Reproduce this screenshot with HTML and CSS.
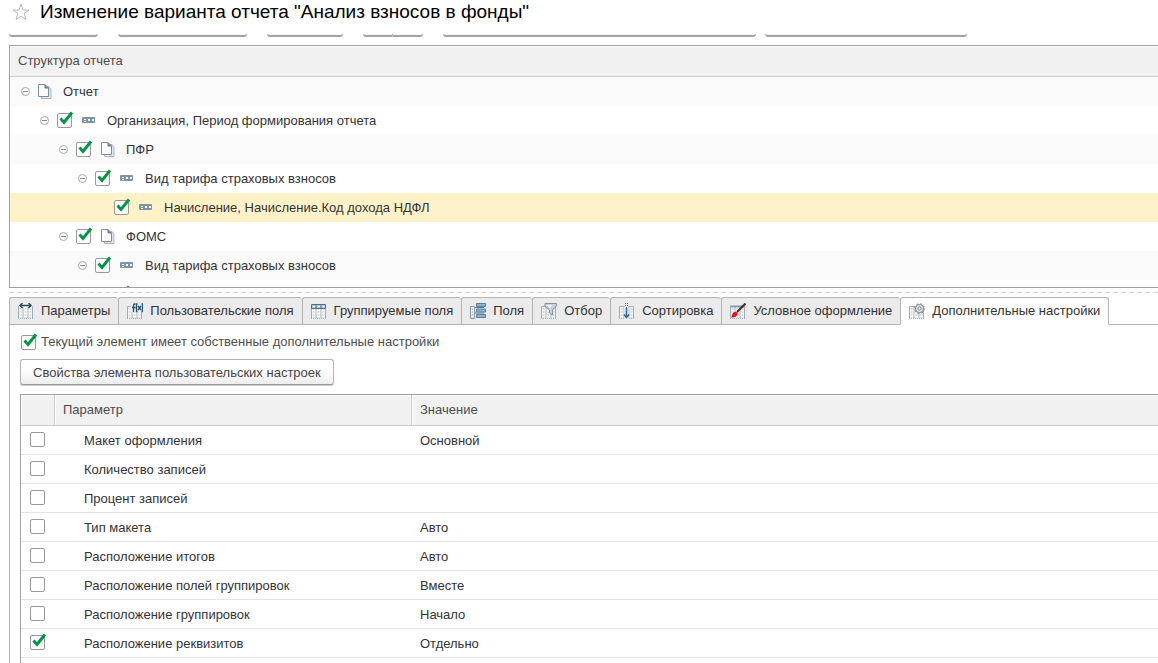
FILE: index.html
```
<!DOCTYPE html>
<html lang="ru">
<head>
<meta charset="utf-8">
<title>Изменение варианта отчета "Анализ взносов в фонды"</title>
<link rel="stylesheet" href="styles.css">
</head>
<body>
<svg class="defs" aria-hidden="true">
  <symbol id="minus" viewBox="0 0 9 9"><circle cx="4.5" cy="4.5" r="4" fill="#fff" stroke="#a6a6a6"/><path d="M2 4.5h5" stroke="#888"/></symbol>
  <symbol id="tick" viewBox="0 0 17 17"><path d="M3.500 7.500L7 11.500L15 1.500" fill="none" stroke="#009646" stroke-width="3"/></symbol>
  <symbol id="doc" viewBox="0 0 14 15"><path d="M8.500 2.500H11L13 5V14.500H3.500V13" fill="#dfe6ec" stroke="#a9b6c2"/><path d="M.5.5H7L10.500 4V12.500H.5Z" fill="#fff" stroke="#7b8fa1"/><path d="M7 .5V4H10.500" fill="#7b8fa1" stroke="#60788e"/></symbol>
  <symbol id="grp" viewBox="0 0 14 15"><rect y="4" width="13" height="6" rx="1" fill="#7c93a8"/><path d="M2 6h2v1H2zM2 8h2v1H2zM6 6h2v2H6zM10 6h2v2h-2z" fill="#fff"/></symbol>
  <symbol id="cols" viewBox="0 0 16 16"><path d="M.5 3.500H14.500V15H.5z" fill="#fff"/><path d="M.5 15V3.500H14.500V15M5 4V15M10 4V15" fill="none" stroke="#9fadb7"/><path d="M2.500 5V15M7.500 5V15M12.500 5V15" stroke="#d3dbe0" stroke-width="2" stroke-dasharray="2 1"/><path d="M0 15.500h15" stroke="#9fadb7" stroke-dasharray="1 1"/></symbol>
</svg>
<main class="window">
  <header class="title-bar">
    <svg class="star" viewBox="0 0 18 18"><path d="M9 1L11 7H17L12 10.500L14 16.500L9 13L4 16.500L6 10.500L1 7H7Z" fill="#fff" stroke="#b4b8bd"/></svg>
    <h1>Изменение варианта отчета "Анализ взносов в фонды"</h1>
  </header>
  <div class="commands">
    <button type="button" class="cmd cmd-s"></button>
    <button type="button" class="cmd cmd-m"></button>
    <button type="button" class="cmd cmd-xs"></button>
    <div class="split"><button type="button" class="cmd"></button><button type="button" class="cmd"></button></div>
    <div class="pair"><button type="button" class="cmd cmd-xl"></button><button type="button" class="cmd cmd-l"></button></div>
  </div>

  <section class="tree">
    <h2 class="tree-head" id="tree-title">Структура отчета</h2>
    <div class="tree-body">
      <div class="node alt"><svg class="fold"><use href="#minus"/></svg><svg class="kind"><use href="#doc"/></svg><span>Отчет</span></div>
      <div class="node lvl1"><svg class="fold"><use href="#minus"/></svg><span class="check"><input type="checkbox" id="n1" checked><svg><use href="#tick"/></svg></span><svg class="kind"><use href="#grp"/></svg><label for="n1">Организация, Период формирования отчета</label></div>
      <div class="node lvl2 alt"><svg class="fold"><use href="#minus"/></svg><span class="check"><input type="checkbox" id="n2" checked><svg><use href="#tick"/></svg></span><svg class="kind"><use href="#doc"/></svg><label for="n2">ПФР</label></div>
      <div class="node lvl3"><svg class="fold"><use href="#minus"/></svg><span class="check"><input type="checkbox" id="n3" checked><svg><use href="#tick"/></svg></span><svg class="kind"><use href="#grp"/></svg><label for="n3">Вид тарифа страховых взносов</label></div>
      <div class="node lvl4 selected"><span class="fold"></span><span class="check"><input type="checkbox" id="n4" checked><svg><use href="#tick"/></svg></span><svg class="kind"><use href="#grp"/></svg><label for="n4">Начисление, Начисление.Код дохода НДФЛ</label></div>
      <div class="node lvl2"><svg class="fold"><use href="#minus"/></svg><span class="check"><input type="checkbox" id="n5" checked><svg><use href="#tick"/></svg></span><svg class="kind"><use href="#doc"/></svg><label for="n5">ФОМС</label></div>
      <div class="node lvl3 alt"><svg class="fold"><use href="#minus"/></svg><span class="check"><input type="checkbox" id="n6" checked><svg><use href="#tick"/></svg></span><svg class="kind"><use href="#grp"/></svg><label for="n6">Вид тарифа страховых взносов</label></div>
      <div class="node lvl4"><span class="fold"></span><span class="check"><input type="checkbox" aria-labelledby="tree-title" checked><svg><use href="#tick"/></svg></span></div>
    </div>
  </section>
  <div class="splitter"></div>

  <div class="tabs" role="tablist">
    <button type="button" role="tab" class="tab"><svg viewBox="0 0 16 16"><use href="#cols"/><path d="M1 0h13v4H1z" fill="#ebebeb"/><path d="M2 2.500H13M4.500 0L2 2.500L4.500 5M10.500 0L13 2.500L10.500 5" fill="none" stroke="#2d4a5c" stroke-width="1.500"/></svg>Параметры</button>
    <button type="button" role="tab" class="tab"><svg viewBox="0 0 16 16"><use href="#cols"/><path d="M4 0h12v9H4z" fill="#ebebeb"/><path d="M8.500 1H7.500Q6.500 1 6.500 2.500V9M5 4.500H8.500M10.500 1H9.500V8.500H10.500M14.500 1H15.500V8.500H14.500M11 3L14 7M14 3L11 7" fill="none" stroke="#29506b" stroke-width="1.300"/></svg>Пользовательские поля</button>
    <button type="button" role="tab" class="tab"><svg viewBox="0 0 16 16"><use href="#cols"/><path d="M.5 1.500H14.500V5.500H.5z" fill="#b9cbd8" stroke="#4d7088"/><path d="M5 1.500V6M10 1.500V6" stroke="#4d7088"/><path d="M2 3.500h2M7 3.500h2M11.500 3.500h2" stroke="#fff"/></svg>Группируемые поля</button>
    <button type="button" role="tab" class="tab"><svg viewBox="0 0 16 16"><path d="M.5 3.500H4.500V15.500H.5z" fill="#fff" stroke="#8799a6"/><path d="M2.500 5V15" stroke="#c0cbd2" stroke-width="2" stroke-dasharray="2 1"/><path d="M6.500.5h9v3h-9zM6.500 6h9v3h-9zM6.500 11.500h9v3h-9z" fill="#8db4cd" stroke="#557f9b"/><path d="M5 4.500H14M5 10H14" stroke="#557f9b"/></svg>Поля</button>
    <button type="button" role="tab" class="tab"><svg viewBox="0 0 16 16"><use href="#cols"/><path d="M4 .5H15.500V3L11.500 7V12L8.500 10V7L4 3Z" fill="#c9d2d8" stroke="#8495a1"/><path d="M6 2h5L9 5Z" fill="#f7f9fa"/></svg>Отбор</button>
    <button type="button" role="tab" class="tab"><svg viewBox="0 0 16 16"><use href="#cols"/><path d="M5.500 0h4v16h-4z" fill="#ebebeb"/><path d="M7.500 5V14" stroke="#2f6697" stroke-width="1.500"/><path d="M5 11.500L7.500 14.500L10 11.500" fill="none" stroke="#2f6697" stroke-width="1.500"/><path d="M6 .5h3M6 2.500h3M7 4.500h1" stroke="#2f6697" stroke-dasharray="1 1"/></svg>Сортировка</button>
    <button type="button" role="tab" class="tab"><svg viewBox="0 0 16 16"><use href="#cols"/><path d="M.5 3.500H14" stroke="#8799a6" stroke-width="2"/><path d="M7 9L15.500 .5" stroke="#4b2c1b" stroke-width="2"/><path d="M1 14.500Q2 13 2.500 10.500Q5 7.500 7.500 10Q7.500 14.500 1 14.500Z" fill="#f20d0d"/></svg>Условное оформление</button>
    <button type="button" role="tab" class="tab active" aria-selected="true"><svg viewBox="0 0 16 16"><use href="#cols"/><circle cx="10.500" cy="5.500" r="4" fill="#dfe3e6" stroke="#8b959d" stroke-width="1.200"/><circle cx="10.500" cy="5.500" r="4.800" fill="none" stroke="#8b959d" stroke-width="1.200" stroke-dasharray="1.900 1.870"/><circle cx="10.500" cy="5.500" r="1.500" fill="#fff" stroke="#77828a"/></svg>Дополнительные настройки</button>
  </div>

  <section class="panel">
    <div class="own"><span class="check"><input type="checkbox" id="own" checked><svg><use href="#tick"/></svg></span><label for="own">Текущий элемент имеет собственные дополнительные настройки</label></div>
    <button type="button" class="props">Свойства элемента пользовательских настроек</button>
    <div class="grid">
      <table>
        <colgroup><col class="c-check"><col class="c-name"><col></colgroup>
        <thead><tr><th></th><th>Параметр</th><th>Значение</th></tr></thead>
        <tbody>
          <tr><td><span class="check"><input type="checkbox" id="p1"></span></td><td><label for="p1">Макет оформления</label></td><td>Основной</td></tr>
          <tr><td><span class="check"><input type="checkbox" id="p2"></span></td><td><label for="p2">Количество записей</label></td><td></td></tr>
          <tr><td><span class="check"><input type="checkbox" id="p3"></span></td><td><label for="p3">Процент записей</label></td><td></td></tr>
          <tr><td><span class="check"><input type="checkbox" id="p4"></span></td><td><label for="p4">Тип макета</label></td><td>Авто</td></tr>
          <tr><td><span class="check"><input type="checkbox" id="p5"></span></td><td><label for="p5">Расположение итогов</label></td><td>Авто</td></tr>
          <tr><td><span class="check"><input type="checkbox" id="p6"></span></td><td><label for="p6">Расположение полей группировок</label></td><td>Вместе</td></tr>
          <tr><td><span class="check"><input type="checkbox" id="p7"></span></td><td><label for="p7">Расположение группировок</label></td><td>Начало</td></tr>
          <tr><td><span class="check"><input type="checkbox" id="p8" checked><svg><use href="#tick"/></svg></span></td><td><label for="p8">Расположение реквизитов</label></td><td>Отдельно</td></tr>
        </tbody>
      </table>
    </div>
  </section>
</main>
</body>
</html>
```
FILE: styles.css
```
* { box-sizing: border-box; }
body {
  margin: 0;
  background: #fff;
  color: #333;
  font: 13px/16px "Liberation Sans", Arial, sans-serif;
}
button, input { font: inherit; color: inherit; margin: 0; }
h1, h2 { margin: 0; font-weight: normal; }
svg { display: block; flex: none; }
.defs { position: absolute; width: 0; height: 0; }

.window {
  display: flex;
  flex-direction: column;
  height: 100vh;
  overflow: hidden;
  padding-left: 9px;
}
.title-bar {
  display: flex;
  align-items: center;
  gap: 10px;
  height: 24px;
  flex: none;
  padding-left: 3px;
}
.star { width: 18px; height: 18px; }
h1 { font-size: 19px; line-height: 24px; color: #000; }

.commands {
  display: flex;
  align-items: flex-end;
  gap: 20px;
  flex: none;
  height: 3px;
  margin: 10px 0 8px;
  overflow: hidden;
}
.cmd {
  flex: none;
  height: 26px;
  padding: 0;
  border: 1px solid #b3b3b3;
  border-bottom: 2px solid #a3a3a3;
  border-radius: 3px;
  background: #f4f4f4;
}
.cmd-xs { width: 76px; }
.cmd-s { width: 89px; }
.cmd-m { width: 129px; }
.cmd-l { width: 202px; }
.cmd-xl { width: 313px; }
.split, .pair { display: flex; }
.pair { gap: 9px; }
.split .cmd { width: 30px; }
.split .cmd:first-child { border-radius: 3px 0 0 3px; }
.split .cmd:last-child { border-radius: 0 3px 3px 0; border-left: 0; }

.tree { flex: none; border: 1px solid #a0a0a0; border-right: 0; }
.tree-head {
  padding: 6px 7px 8px;
  border: 1px solid #fff;
  border-width: 1px 0 0 1px;
  background: #f1f1f1;
  box-shadow: 0 1px #ccc;
  color: #4d4d4d;
  font-size: 13px;
  line-height: 15px;
}
.tree-body { height: 210px; margin-top: 1px; overflow: hidden; }
.node { display: flex; align-items: center; height: 29px; padding-left: 11px; }
.node.alt { background: #fafafa; }
.node.selected { background: #fff2c8; }
.lvl1 { padding-left: 30px; }
.lvl2 { padding-left: 49px; }
.lvl3 { padding-left: 68px; }
.lvl4 { padding-left: 87px; }
.fold { width: 9px; height: 9px; margin-right: 8px; }
.kind { width: 14px; height: 15px; margin-right: 11px; }
.node .check { margin-right: 10px; }

.check { position: relative; display: block; flex: none; width: 15px; height: 15px; }
.check input {
  appearance: none;
  display: block;
  width: 15px;
  height: 15px;
  border: 1px solid #999;
  border-radius: 2px;
  background: #fff;
}
.check svg { position: absolute; left: 0; bottom: 0; width: 17px; height: 17px; pointer-events: none; }

.splitter { flex: none; height: 9px; background: repeating-linear-gradient(90deg, #d4d4d4 0 5px, #fff 5px 8px) 0 4px / 100% 1px no-repeat; }

.tabs { display: flex; flex: none; box-shadow: inset 0 -1px #b3b3b3; }
.tab {
  display: flex;
  align-items: center;
  gap: 7px;
  height: 28px;
  flex: none;
  padding: 0 8px;
  border: 1px solid #b3b3b3;
  border-right: 0;
  border-radius: 3px 3px 0 0;
  background: #ebebeb;
  white-space: nowrap;
}
.tab svg { width: 16px; height: 16px; }
.tab.active { border-right: 1px solid #b3b3b3; border-bottom-color: #fff; background: #fff; }

.panel {
  display: flex;
  flex-direction: column;
  align-items: flex-start;
  flex: 1;
  min-height: 0;
  padding: 9px 0 0 10px;
  border-left: 1px solid #b3b3b3;
}
.own { display: flex; align-items: center; gap: 5px; padding-left: 1px; color: #4d4d4d; }
.props {
  height: 26px;
  margin: 9px 0;
  padding: 2px 12px 0;
  border: 1px solid #b3b3b3;
  border-bottom-color: #999;
  border-radius: 3px;
  background: linear-gradient(#fff 40%, #ededed);
  box-shadow: 0 1px #ccc;
  color: #444;
}
.grid { flex: 1; align-self: stretch; min-height: 0; border: 1px solid #a0a0a0; border-width: 1px 0 0 1px; }
table { width: 100%; border-collapse: separate; border-spacing: 0; table-layout: fixed; }
.c-check { width: 33px; }
.c-name { width: 357px; }
th {
  height: 31px;
  padding: 0 8px;
  border-bottom: 1px solid #ccc;
  border-left: 1px solid #ccc;
  background: #f1f1f1;
  box-shadow: inset 1px 1px #fff;
  color: #4d4d4d;
  font-weight: normal;
  text-align: left;
}
th:first-child { border-left: 0; }
td { height: 29px; padding: 2px 9px 0; border-bottom: 1px solid #e3e3e3; }
td:first-child { padding: 0 9px 2px; }
td:nth-child(2) { padding-left: 30px; }
```
